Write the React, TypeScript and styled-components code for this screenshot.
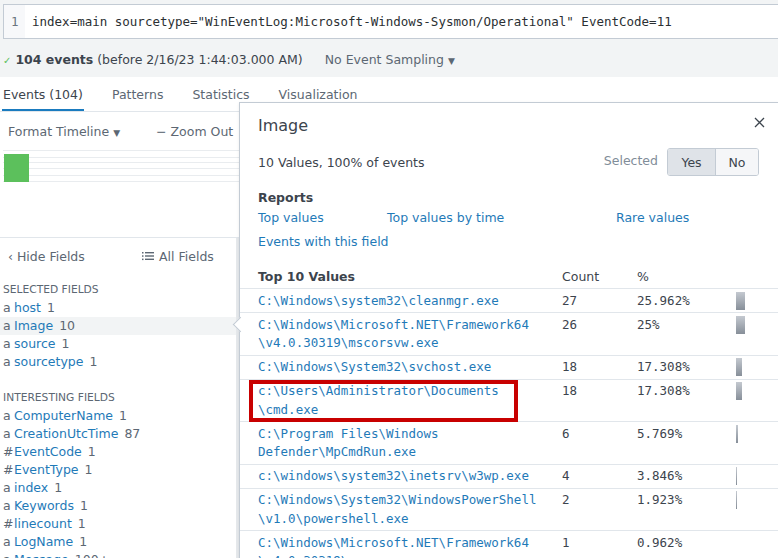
import React from "react";
import styled, { createGlobalStyle } from "styled-components";

const GlobalStyle = createGlobalStyle`
  html, body { margin: 0; padding: 0; background: #fff; }
  body {
    font-family: "DejaVu Sans", "Noto Sans", sans-serif;
    font-size: 12.5px;
    color: #3c444d;
    overflow: hidden;
  }
  * { box-sizing: border-box; }
`;

const MONO = `"DejaVu Sans Mono", "Liberation Mono", monospace`;
const LINK = "#1f7ab8";
const MUTED = "#5c6773";

const Page = styled.div`
  position: relative;
  width: 778px;
  height: 558px;
  overflow: hidden;
  display: flex;
  flex-direction: column;
  & > * { flex-shrink: 0; }
`;

const TopArea = styled.div`
  background: #f2f4f5;
  padding: 4px 0 0 3px;
`;

const SearchBox = styled.div`
  display: flex;
  height: 35px;
  background: #fff;
  border: 1px solid #c3cbd4;
  border-right: none;
`;

const Gutter = styled.div`
  width: 21px;
  background: #f7f8fa;
  color: #6b7580;
  font-family: ${MONO};
  font-size: 12.5px;
  display: flex;
  align-items: center;
  padding-left: 7px;
`;

const Code = styled.div`
  display: flex;
  align-items: center;
  padding-left: 7px;
  font-family: ${MONO};
  font-size: 12.5px;
  color: #2b3033;
  white-space: pre;
`;

const StatusBar = styled.div`
  height: 38px;
  display: flex;
  align-items: center;
  white-space: pre;
  padding-top: 2px;
`;

const Check = styled.span`
  color: #5cc05c;
  font-size: 10px;
  margin-right: 4px;
  margin-top: 2px;
`;

const Bold = styled.b`
  font-weight: bold;
`;

const Sampling = styled.span`
  color: ${MUTED};
  margin-left: 22px;
`;

const Caret = styled.span`
  font-size: 9px;
  margin-left: 4px;
`;

const TabBar = styled.div`
  height: 35px;
  display: flex;
  align-items: stretch;
  border-bottom: 1px solid #e1e6eb;
  padding-left: 2px;
`;

const Tab = styled.div<{ $active?: boolean }>`
  display: flex;
  align-items: center;
  padding: 1px 1px 0;
  margin-right: 27px;
  color: ${(p) => (p.$active ? "#3c444d" : MUTED)};
  box-shadow: ${(p) => (p.$active ? "inset 0 -2px 0 #1a7bbf" : "none")};
`;

const TimelinePanel = styled.div`
  height: 126px;
  border-bottom: 1px solid #e1e6eb;
  display: flex;
  flex-direction: column;
`;

const TimelineHeader = styled.div`
  height: 38px;
  display: flex;
  align-items: center;
  padding-left: 8px;
  color: ${MUTED};
  white-space: pre;
`;

const ZoomOut = styled.span`
  margin-left: 36px;
`;

const Lower = styled.div`
  display: flex;
  flex: 1;
  min-height: 0;
`;

const Sidebar = styled.div`
  width: 239px;
  border-right: 3px solid #e6e9ec;
  display: flex;
  flex-direction: column;
  & > * { flex-shrink: 0; }
`;

const ToggleRow = styled.div`
  height: 36px;
  display: flex;
  align-items: center;
  color: ${MUTED};
  padding-left: 8px;
  white-space: pre;
`;

const HideFields = styled.span`
  width: 134px;
`;

const AllFields = styled.span`
  display: inline-flex;
  align-items: center;
  gap: 5px;
`;

const SectionHeading = styled.div<{ $gap: number }>`
  margin-top: ${(p) => p.$gap}px;
  line-height: 18px;
  font-size: 10.7px;
  color: ${MUTED};
  padding-left: 3px;
  text-transform: uppercase;
`;

const FieldRow = styled.div<{ $selected?: boolean }>`
  height: 18px;
  line-height: 18px;
  padding-left: 3px;
  white-space: nowrap;
  background: ${(p) => (p.$selected ? "#f2f4f5" : "transparent")};
`;

const FieldType = styled.span`
  display: inline-block;
  width: 11px;
  color: ${MUTED};
`;

const FieldName = styled.span`
  color: ${LINK};
`;

const FieldCount = styled.span`
  color: ${MUTED};
  margin-left: 6px;
`;

const Popover = styled.div`
  position: absolute;
  left: 239px;
  top: 102px;
  width: 540px;
  height: 520px;
  background: #fff;
  border: 1px solid #c3cbd4;
  box-shadow: 0 1px 3px rgba(0, 0, 0, 0.08);
`;

const Arrow = styled.div`
  position: absolute;
  left: -5px;
  top: 216px;
  width: 11px;
  height: 11px;
  background: #fff;
  border-left: 1px solid #c3cbd4;
  border-bottom: 1px solid #c3cbd4;
  transform: rotate(45deg);
`;

const PopBody = styled.div`
  padding: 0 19px 0 18px;
`;

const PopHeader = styled.div`
  margin-top: 11px;
  height: 22px;
  display: flex;
  align-items: center;
  justify-content: space-between;
`;

const Title = styled.div`
  font-size: 16px;
  color: #3c444d;
`;

const CloseButton = styled.button`
  border: none;
  background: none;
  padding: 0;
  margin-right: -6px;
  margin-top: -6px;
  display: flex;
  cursor: pointer;
`;

const SummaryRow = styled.div`
  margin-top: 12px;
  height: 28px;
  display: flex;
  align-items: center;
  justify-content: space-between;
`;

const SelectedLabel = styled.span`
  color: #818d99;
  margin-right: 9px;
  margin-top: -4px;
`;

const RightGroup = styled.div`
  display: flex;
  align-items: center;
`;

const ButtonGroup = styled.div`
  display: flex;
  height: 28px;
  border: 1px solid #c3cbd4;
  border-radius: 3px;
  overflow: hidden;
`;

const ToggleButton = styled.button<{ $on?: boolean; $w: number }>`
  width: ${(p) => p.$w}px;
  border: none;
  border-left: ${(p) => (p.$on ? "none" : "1px solid #c3cbd4")};
  background: ${(p) => (p.$on ? "#dfe3e8" : "#f5f6f8")};
  color: #3c444d;
  font-family: inherit;
  font-size: 12.5px;
  padding: 0;
  padding-top: 1px;
`;

const SubHeading = styled.div<{ $gap: number }>`
  margin-top: ${(p) => p.$gap}px;
  line-height: 18px;
  font-weight: bold;
`;

const LinkGrid = styled.div`
  margin-top: 2px;
  display: grid;
  grid-template-columns: 129px 229px 1fr;
  row-gap: 6px;
  line-height: 18px;
`;

const Link = styled.a`
  color: ${LINK};
  text-decoration: none;
  white-space: nowrap;
`;

const Table = styled.div`
  margin-top: 13px;
`;

const Row = styled.div<{ $head?: boolean }>`
  display: grid;
  grid-template-columns: 322px 75px 99px 1fr;
  border-bottom: 1px solid #e1e6eb;
  padding: ${(p) => (p.$head ? "4px 0 2px" : "2.5px 0 2px")};
  line-height: ${(p) => (p.$head ? "18px" : "18.5px")};
`;

const HeadCell = styled.div<{ $first?: boolean; $bold?: boolean }>`
  padding-left: ${(p) => (p.$first ? 18 : 0)}px;
  font-weight: ${(p) => (p.$bold ? "bold" : "normal")};
`;

const ValueCell = styled.div`
  position: relative;
  padding: 0 15px 0 18px;
  font-family: ${MONO};
  font-size: 12.5px;
  color: ${LINK};
  white-space: nowrap;
`;

const ValueLine = styled.div``;

const NumCell = styled.div`
  font-family: ${MONO};
  font-size: 12.5px;
  color: #3c444d;
`;

const BarCell = styled.div``;

const Bar = styled.div`
  height: 18px;
  background: linear-gradient(#c4c9d0, #878f99);
`;

const Highlight = styled.div`
  position: absolute;
  left: 9px;
  width: 269px;
  top: -2px;
  bottom: -3px;
  border: 4px solid #c80000;
  pointer-events: none;
`;

const selected = [
  { t: "a", n: "host", c: "1" },
  { t: "a", n: "Image", c: "10", sel: true },
  { t: "a", n: "source", c: "1" },
  { t: "a", n: "sourcetype", c: "1" },
];

const interesting = [
  { t: "a", n: "ComputerName", c: "1" },
  { t: "a", n: "CreationUtcTime", c: "87" },
  { t: "#", n: "EventCode", c: "1" },
  { t: "#", n: "EventType", c: "1" },
  { t: "a", n: "index", c: "1" },
  { t: "a", n: "Keywords", c: "1" },
  { t: "#", n: "linecount", c: "1" },
  { t: "a", n: "LogName", c: "1" },
  { t: "a", n: "Message", c: "100+" },
];

const values = [
  { v: ["C:\\Windows\\system32\\cleanmgr.exe"], c: "27", p: "25.962%", n: 25.962 },
  { v: ["C:\\Windows\\Microsoft.NET\\Framework64", "\\v4.0.30319\\mscorsvw.exe"], c: "26", p: "25%", n: 25 },
  { v: ["C:\\Windows\\System32\\svchost.exe"], c: "18", p: "17.308%", n: 17.308 },
  { v: ["c:\\Users\\Administrator\\Documents", "\\cmd.exe"], c: "18", p: "17.308%", n: 17.308, mark: true },
  { v: ["C:\\Program Files\\Windows", "Defender\\MpCmdRun.exe"], c: "6", p: "5.769%", n: 5.769 },
  { v: ["c:\\windows\\system32\\inetsrv\\w3wp.exe"], c: "4", p: "3.846%", n: 3.846 },
  { v: ["C:\\Windows\\System32\\WindowsPowerShell", "\\v1.0\\powershell.exe"], c: "2", p: "1.923%", n: 1.923 },
  { v: ["C:\\Windows\\Microsoft.NET\\Framework64", "\\v4.0.30319\\csc.exe"], c: "1", p: "0.962%", n: 0.962 },
];

function TimelineChart() {
  const lines = [0.5, 7.5, 12.5, 18.5, 25.5, 31.5];
  return (
    <svg width="778" height="34" style={{ display: "block" }}>
      {lines.map((y) => (
        <line key={y} x1="3" x2="778" y1={y} y2={y} stroke="#e9ecef" strokeWidth="1" />
      ))}
      <rect x="4" y="4" width="25" height="28" fill="#5cc05c" />
    </svg>
  );
}

function ListIcon() {
  return (
    <svg width="12" height="10" viewBox="0 0 12 10">
      <rect x="0" y="1" width="1.5" height="1.5" fill={MUTED} />
      <rect x="0" y="4.3" width="1.5" height="1.5" fill={MUTED} />
      <rect x="0" y="7.6" width="1.5" height="1.5" fill={MUTED} />
      <rect x="3" y="1" width="9" height="1.4" fill={MUTED} />
      <rect x="3" y="4.3" width="9" height="1.4" fill={MUTED} />
      <rect x="3" y="7.6" width="9" height="1.4" fill={MUTED} />
    </svg>
  );
}

function CloseIcon() {
  return (
    <svg width="11" height="11" viewBox="0 0 11 11">
      <path d="M1 1 L10 10 M10 1 L1 10" stroke="#3c444d" strokeWidth="1.3" fill="none" />
    </svg>
  );
}

export default function App() {
  return (
    <Page>
      <GlobalStyle />
      <TopArea>
        <SearchBox>
          <Gutter>1</Gutter>
          <Code>index=main sourcetype="WinEventLog:Microsoft-Windows-Sysmon/Operational" EventCode=11</Code>
        </SearchBox>
        <StatusBar>
          <Check>✓</Check>
          <Bold>104 events</Bold>
          <span> (before 2/16/23 1:44:03.000 AM)</span>
          <Sampling>
            No Event Sampling<Caret>▼</Caret>
          </Sampling>
        </StatusBar>
      </TopArea>

      <TabBar>
        <Tab $active>Events (104)</Tab>
        <Tab>Patterns</Tab>
        <Tab>Statistics</Tab>
        <Tab>Visualization</Tab>
      </TabBar>

      <TimelinePanel>
        <TimelineHeader>
          <span>
            Format Timeline<Caret>▼</Caret>
          </span>
          <ZoomOut>− Zoom Out</ZoomOut>
        </TimelineHeader>
        <TimelineChart />
      </TimelinePanel>

      <Lower>
        <Sidebar>
          <ToggleRow>
            <HideFields>‹ Hide Fields</HideFields>
            <AllFields>
              <ListIcon />
              All Fields
            </AllFields>
          </ToggleRow>
          <SectionHeading $gap={7}>Selected Fields</SectionHeading>
          {selected.map((f) => (
            <FieldRow key={f.n} $selected={f.sel}>
              <FieldType>{f.t}</FieldType>
              <FieldName>{f.n}</FieldName>
              <FieldCount>{f.c}</FieldCount>
            </FieldRow>
          ))}
          <SectionHeading $gap={18}>Interesting Fields</SectionHeading>
          {interesting.map((f) => (
            <FieldRow key={f.n}>
              <FieldType>{f.t}</FieldType>
              <FieldName>{f.n}</FieldName>
              <FieldCount>{f.c}</FieldCount>
            </FieldRow>
          ))}
        </Sidebar>
      </Lower>

      <Popover>
        <Arrow />
        <PopBody>
          <PopHeader>
            <Title>Image</Title>
            <CloseButton aria-label="Close">
              <CloseIcon />
            </CloseButton>
          </PopHeader>
          <SummaryRow>
            <span>10 Values, 100% of events</span>
            <RightGroup>
              <SelectedLabel>Selected</SelectedLabel>
              <ButtonGroup>
                <ToggleButton $on $w={47}>Yes</ToggleButton>
                <ToggleButton $w={43}>No</ToggleButton>
              </ButtonGroup>
            </RightGroup>
          </SummaryRow>
          <SubHeading $gap={13}>Reports</SubHeading>
          <LinkGrid>
            <Link>Top values</Link>
            <Link>Top values by time</Link>
            <Link>Rare values</Link>
            <Link>Events with this field</Link>
          </LinkGrid>
        </PopBody>
        <Table>
          <Row $head>
            <HeadCell $first $bold>Top 10 Values</HeadCell>
            <HeadCell>Count</HeadCell>
            <HeadCell>%</HeadCell>
            <HeadCell />
          </Row>
          {values.map((r) => (
            <Row key={r.v.join("")}>
              <ValueCell>
                {r.v.map((line) => (
                  <ValueLine key={line}>{line}</ValueLine>
                ))}
                {r.mark && <Highlight />}
              </ValueCell>
              <NumCell>{r.c}</NumCell>
              <NumCell>{r.p}</NumCell>
              <BarCell>
                <Bar style={{ width: `${Math.round(r.n * 0.35)}px` }} />
              </BarCell>
            </Row>
          ))}
        </Table>
      </Popover>
    </Page>
  );
}
